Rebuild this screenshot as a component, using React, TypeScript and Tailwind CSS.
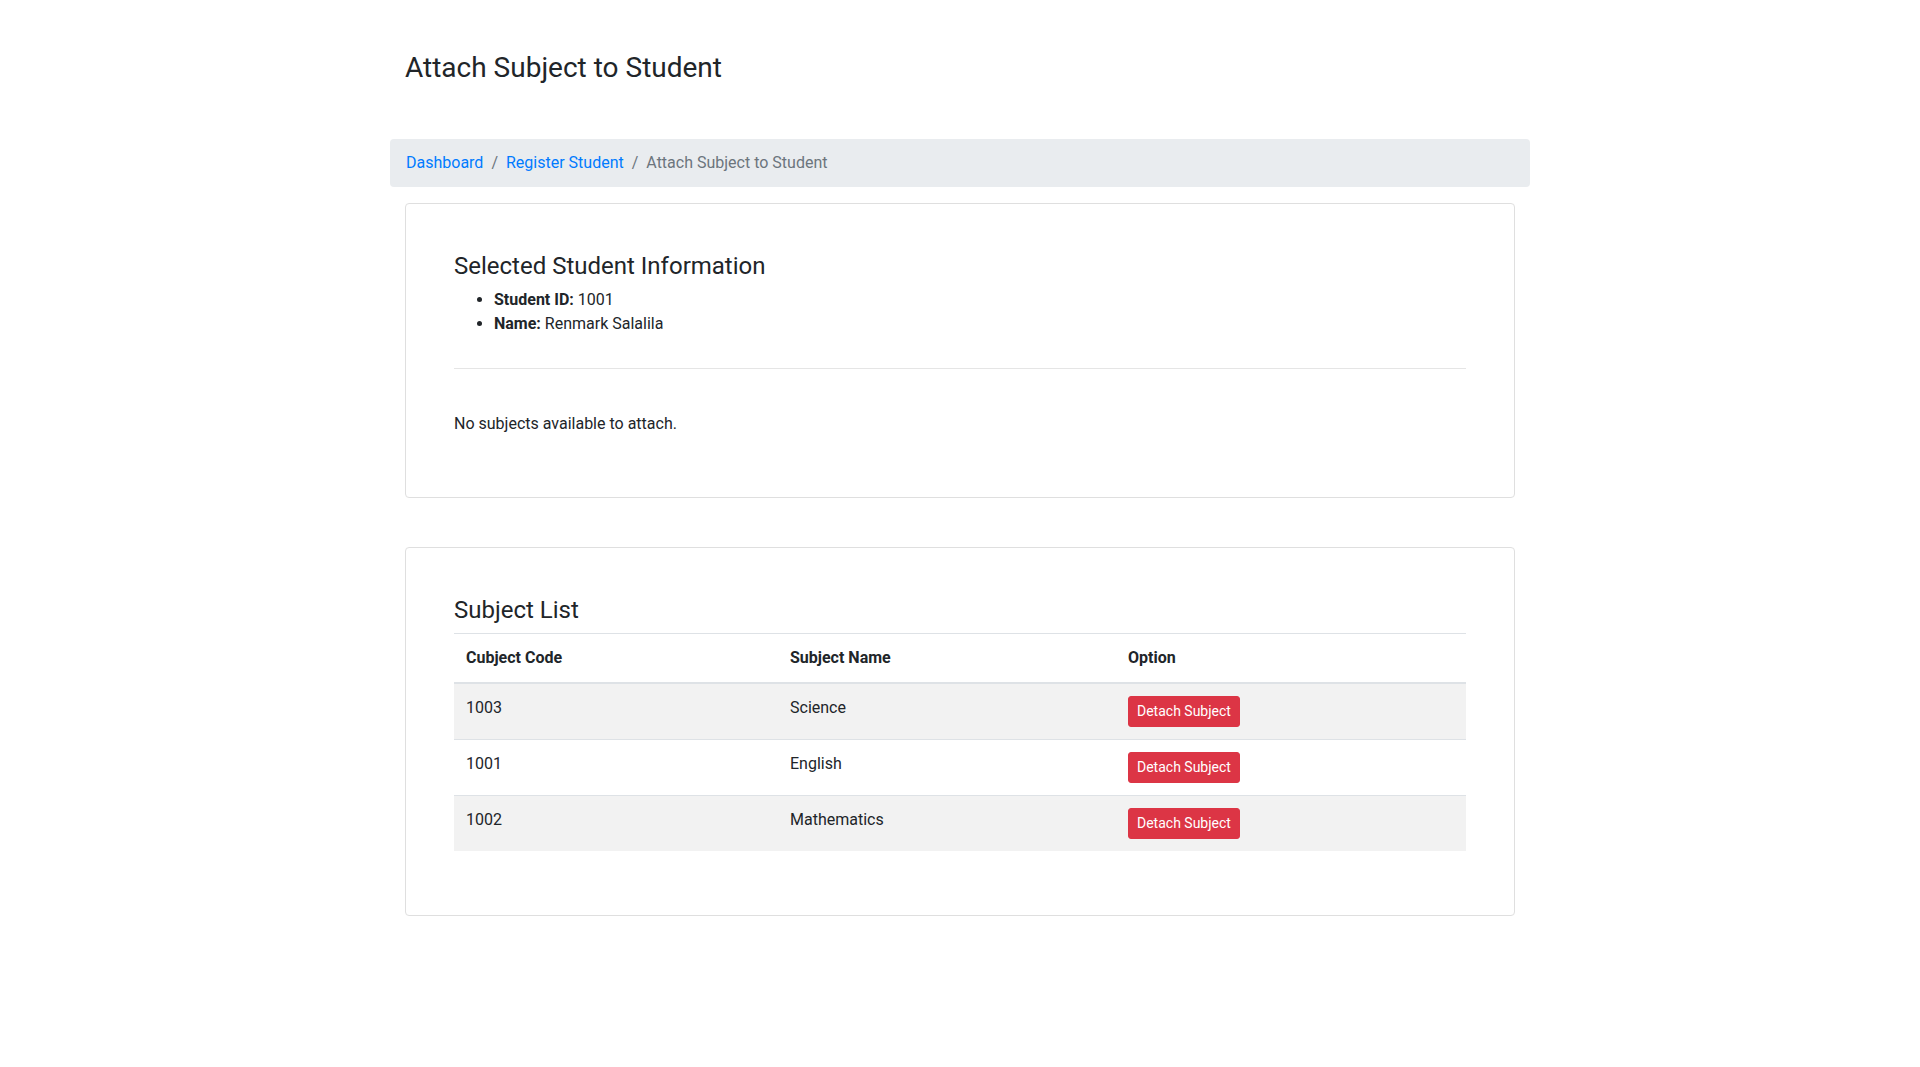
import React from 'react'

const subjects = [
  { code: '1003', name: 'Science' },
  { code: '1001', name: 'English' },
  { code: '1002', name: 'Mathematics' },
]

export default function App() {
  return (
    <div className="min-h-screen bg-white text-[#212529] text-base leading-6 font-['Segoe_UI',Roboto,'Liberation_Sans',sans-serif]">
      <div className="w-[1140px] mx-auto pt-[51px] pb-12">
        <h3 className="px-[15px] text-[28px] leading-[1.2] font-normal mb-[54px]">Attach Subject to Student</h3>

        {/* Breadcrumb */}
        <nav className="flex items-center bg-[#e9ecef] rounded px-4 py-3 mb-4">
          <a href="#" className="text-[#007bff]">Dashboard</a>
          <span className="px-2 text-[#6c757d]">/</span>
          <a href="#" className="text-[#007bff]">Register Student</a>
          <span className="px-2 text-[#6c757d]">/</span>
          <span className="text-[#6c757d]">Attach Subject to Student</span>
        </nav>

        {/* Student info card */}
        <div className="mx-[15px] border border-[#dfdfdf] rounded">
          <div className="p-12">
            <h4 className="text-2xl leading-[1.2] font-normal mb-2">Selected Student Information</h4>
            <ul className="list-disc pl-10">
              <li><strong className="font-bold">Student ID:</strong> 1001</li>
              <li><strong className="font-bold">Name:</strong> Renmark Salalila</li>
            </ul>
            <hr className="border-0 border-t border-[#e5e5e5] mt-8 mb-[43px]" />
            <p className="mb-[13px]">No subjects available to attach.</p>
          </div>
        </div>

        {/* Subject list card */}
        <div className="mx-[15px] mt-[49px] border border-[#dfdfdf] rounded">
          <div className="p-12">
            <h4 className="text-2xl leading-[1.2] font-normal mb-2">Subject List</h4>
            <table className="w-full border-collapse mb-4">
              <thead>
                <tr>
                  <th className="w-[324px] text-left font-bold p-3 border-t border-b-2 border-[#dee2e6]">Cubject Code</th>
                  <th className="w-[338px] text-left font-bold p-3 border-t border-b-2 border-[#dee2e6]">Subject Name</th>
                  <th className="text-left font-bold p-3 border-t border-b-2 border-[#dee2e6]">Option</th>
                </tr>
              </thead>
              <tbody>
                {subjects.map((s, i) => (
                  <tr key={s.code} className={i % 2 === 0 ? 'bg-[#f2f2f2]' : ''}>
                    <td className="p-3 align-top border-t border-[#dee2e6]">{s.code}</td>
                    <td className="p-3 align-top border-t border-[#dee2e6]">{s.name}</td>
                    <td className="p-3 align-top border-t border-[#dee2e6]">
                      <button className="bg-[#dc3545] border border-[#dc3545] text-white text-sm leading-[1.5] px-2 py-1 rounded-[3px]">
                        Detach Subject
                      </button>
                    </td>
                  </tr>
                ))}
              </tbody>
            </table>
          </div>
        </div>
      </div>
    </div>
  )
}
